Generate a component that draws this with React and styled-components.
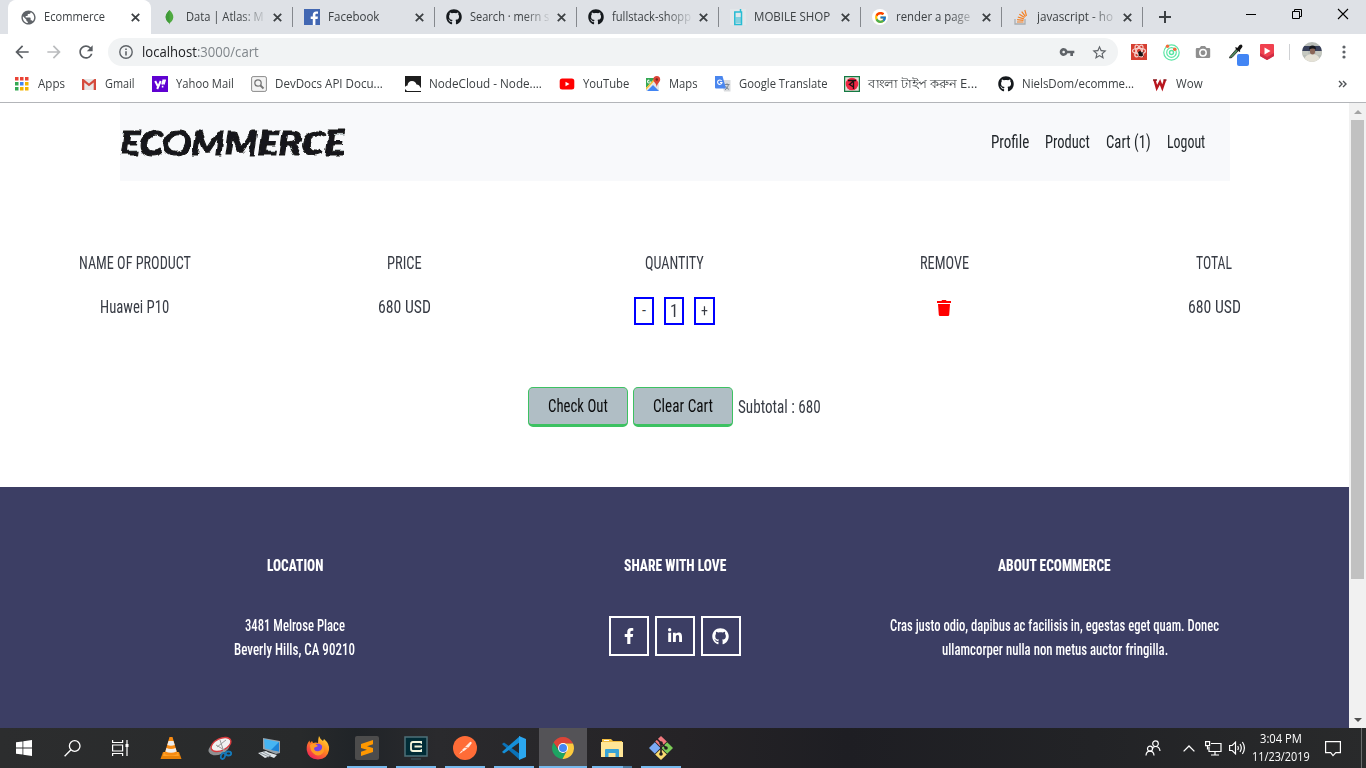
import React, { useLayoutEffect, useRef, useState } from "react";
import styled, { createGlobalStyle, css } from "styled-components";
import { FaFacebookF, FaLinkedinIn, FaGithub } from "react-icons/fa";
import { FcGoogle } from "react-icons/fc";
import { MdVpnKey, MdStarBorder, MdPublic, MdRefresh, MdArrowBack, MdArrowForward } from "react-icons/md";

const GlobalStyle = createGlobalStyle`
  * { box-sizing: border-box; }
  body { margin: 0; background: #fff; overflow: hidden; }
  svg { display: block; flex: none; }
`;

const Screen = styled.div`
  width: 1366px;
  height: 768px;
  display: flex;
  flex-direction: column;
  font-family: "Open Sans", "Noto Sans", sans-serif;
  font-size: 12px;
  color: #3c4043;
`;

/* ---------- text set to a given width ---------- */
const FitBox = styled.span`
  display: inline-block;
  flex: none;
  width: ${(p) => p.$w}px;
  white-space: nowrap;
  text-align: left;
`;
const FitInner = styled.span`
  display: inline-block;
  transform-origin: 0 50%;
`;
function Fit({ w, children }) {
  const ref = useRef(null);
  const [k, setK] = useState(1);
  useLayoutEffect(() => {
    if (ref.current.offsetWidth) setK(w / ref.current.offsetWidth);
  }, [w]);
  return (
    <FitBox $w={w}>
      <FitInner ref={ref} style={{ transform: `scaleX(${k})` }}>{children}</FitInner>
    </FitBox>
  );
}

/* ---------- tab strip ---------- */
const TabStrip = styled.div`
  height: 34px;
  flex: none;
  display: flex;
  background: #dee1e6;
  padding-left: 8px;
`;
const Tab = styled.div`
  width: ${(p) => p.$w || 142}px;
  height: 34px;
  flex: none;
  display: flex;
  align-items: center;
  padding: 0 7px 0 12px;
  position: relative;
  ${(p) =>
    p.$active &&
    css`
      background: #fff;
      border-radius: 8px 8px 0 0;
      box-shadow: 1px 0 0 #fff;
    `}
  ${(p) =>
    p.$line &&
    css`
      &::after {
        content: "";
        position: absolute;
        right: -1px;
        top: 7px;
        width: 1px;
        height: 20px;
        background: #85888d;
      }
    `}
`;
const TabIcon = styled.span`
  width: 16px;
  height: 16px;
  display: flex;
  align-items: center;
  justify-content: center;
`;
const TabTitle = styled.span`
  width: 82px;
  margin-left: 8px;
  white-space: nowrap;
  line-height: 18px;
  ${(p) => p.$fade && "mask-image: linear-gradient(90deg, #000 65%, transparent);"}
`;
const TabClose = styled.span`
  margin-left: auto;
  width: 16px;
  height: 16px;
  display: flex;
  align-items: center;
  justify-content: center;
`;
const NewTab = styled.div`
  width: 44px;
  margin-left: 1px;
  display: flex;
  align-items: center;
  justify-content: center;
`;
const WindowButtons = styled.div`
  margin-left: auto;
  display: flex;
  height: 28px;
  svg { width: 46px; height: 28px; }
`;

const Cross = ({ s = 9, w = 1.8, c = "#3c4043" }) => (
  <svg width={s} height={s} viewBox="0 0 9 9"><path d="M.8.8l7.4 7.4M8.2.8L.8 8.2" stroke={c} strokeWidth={w} /></svg>
);
const Leaf = () => (
  <svg width="16" height="16" viewBox="0 0 16 16"><path d="M7.500 1c3 3 4 5 3.800 7.500C11.100 11 9.500 12.700 7.800 14L7.500 15.500 7.100 14C5.500 12.700 3.800 11 3.700 8.500 3.500 5 6 3 7.500 1z" fill="#4faa41" /><path d="M7.500 1v14.500L7.100 14C5.500 12.700 3.800 11 3.700 8.500 3.500 5 6 3 7.500 1z" fill="#3f9a38" /></svg>
);
const FbSquare = () => (
  <svg width="16" height="16" viewBox="0 0 16 16"><path fill="#4267b2" d="M0 0h16v16H0z" /><path fill="#fff" d="M8.800 16V10H6.700V7.600h2.100V6c0-2.300 1.300-3.500 3.300-3.500.9 0 1.700.1 1.900.1v2.200h-1.300c-1 0-1.300.5-1.300 1.200v1.600h2.500L13.600 10h-2.200v6z" /></svg>
);
const Phone = () => (
  <svg width="16" height="18" viewBox="0 0 16 18" fill="none"><path d="M0 1h16v16H0z" fill="#e3e7ea" /><path d="M10.500 1v3M4.800 4h6.700v12.500H4.800z" stroke="#26bcd4" strokeWidth="1.500" /><path d="M5.500 10h5.500M5.500 12h5.500M5.500 14h5.500" stroke="#26bcd4" strokeWidth="1.200" /></svg>
);
const GoogleDot = styled.span`
  width: 16px;
  height: 16px;
  flex: none;
  border-radius: 8px;
  background: #fff;
  display: flex;
  align-items: center;
  justify-content: center;
`;
const StackIcon = () => (
  <svg width="16" height="16" viewBox="0 0 16 16" fill="none"><path d="M2 10v5h10v-5" stroke="#a9adb1" strokeWidth="1.300" /><path d="M4 13h6.500M4.100 10.700l6.400.7M4.800 8l6.100 1.800M6.300 5.200l5.300 3.200M8.700 2.700l3.800 4.900M11.800 1l1.700 5.800" stroke="#f48024" strokeWidth="1.200" /></svg>
);

const tabs = [
  { title: "Ecommerce", w: 61, icon: <MdPublic size={17} color="#5f6368" />, active: true },
  { title: "Data | Atlas: M", w: 78, icon: <Leaf />, fade: true, line: true },
  { title: "Facebook", w: 51, icon: <FbSquare />, line: true },
  { title: "Search · mern s", w: 79, icon: <FaGithub size={16} color="#15191d" />, fade: true, line: true },
  { title: "fullstack-shopp", w: 79, icon: <FaGithub size={16} color="#15191d" />, fade: true, line: true },
  { title: "MOBILE SHOP", w: 76, icon: <Phone />, line: true },
  { title: "render a page", w: 74, icon: <GoogleDot><FcGoogle size={13} /></GoogleDot>, fade: true, line: true, tab: 141 },
  { title: "javascript - ho", w: 76, icon: <StackIcon />, fade: true, line: true, tab: 141 },
];

/* ---------- toolbar ---------- */
const Toolbar = styled.div`
  height: 36px;
  flex: none;
  display: flex;
  align-items: center;
  padding-left: 6px;
`;
const NavButton = styled.span`
  width: 32px;
  display: flex;
  justify-content: center;
`;
const Omnibox = styled.div`
  width: 1010px;
  height: 28px;
  margin-left: 6px;
  border-radius: 14px;
  background: #f1f3f4;
  display: flex;
  align-items: center;
  padding: 0 10px 0 11px;
  font-size: 14px;
  color: #80868b;
  b { font-weight: 400; color: #202124; }
`;
const UrlText = styled.span`
  margin-left: 9px;
  line-height: 20px;
`;
const OmniActions = styled.span`
  margin-left: auto;
  display: flex;
  align-items: center;
  gap: 16px;
`;
const Extensions = styled.div`
  display: flex;
  align-items: center;
  margin-left: 13px;
`;
const Ext = styled.span`
  margin-left: ${(p) => p.$gap || 0}px;
`;
const ExtDivider = styled.span`
  width: 1px;
  height: 16px;
  margin-left: 14px;
  background: #cfd1d4;
`;
const Info = () => (
  <svg width="14" height="14" viewBox="0 0 14 14" fill="none" stroke="#5f6368" strokeWidth="1.400"><circle cx="7" cy="7" r="6.200" /><path d="M7 6.200v4.200M7 3.400v1.500" strokeWidth="1.600" /></svg>
);
const ReactExt = () => (
  <svg width="16" height="16" viewBox="0 0 16 16" fill="none"><path fill="#d63f31" d="M0 0h16v16H0z" /><g stroke="#f7cdc8" strokeWidth="1.300"><ellipse cx="8" cy="7" rx="6.500" ry="2.600" /><ellipse cx="8" cy="7" rx="6.500" ry="2.600" transform="rotate(60 8 7)" /><ellipse cx="8" cy="7" rx="6.500" ry="2.600" transform="rotate(120 8 7)" /></g><path d="M7 8l2.500-1 2.500 3-1.500 2.500-2.500-.5z" fill="#151515" /><path d="M7.500 12l5-4M8.500 7.500l4 5" stroke="#151515" /></svg>
);
const RadarExt = () => (
  <svg width="17" height="17" viewBox="0 0 17 17" fill="none" stroke="#5ce6a5"><circle cx="8.500" cy="8.500" r="7.700" strokeWidth="1.200" /><circle cx="8.500" cy="8.500" r="4.800" strokeWidth="1.200" /><circle cx="8.500" cy="8.500" r="2" strokeWidth="1.500" /><circle cx="4.500" cy="2.300" r="1.700" fill="#f26b3a" stroke="none" /><circle cx="11.800" cy="5.200" r="1.800" fill="#f26b3a" stroke="none" /></svg>
);
const CameraExt = () => (
  <svg width="16" height="16" viewBox="0 0 16 16"><path fill="#8f8f8f" d="M2 4h2.500L6 2h4l1.500 2H14q1.200 0 1.200 1.200v7.600Q15.200 14 14 14H2Q.8 14 .8 12.800V5.200Q.8 4 2 4z" /><circle cx="8" cy="8.700" r="3.200" fill="none" stroke="#fff" strokeWidth="1.500" /></svg>
);
const PickerExt = () => (
  <svg width="22" height="28" viewBox="0 0 22 28"><g transform="translate(0 4.500)"><path d="M2 14L8.500 6.500l1.800 1.700L4 15l-2.500.5z" fill="#4d8a5d" stroke="#222" strokeWidth=".8" /><path d="M7.500 5l4.500 4M9 7l3-4q1.800-1 1.800 1L11 8z" fill="#111" stroke="#111" strokeWidth="1.300" /></g><rect x="9" y="16" width="12" height="12" rx="2" fill="#4285f4" /></svg>
);
const VideoExt = () => (
  <svg width="16" height="16" viewBox="0 0 16 16"><path fill="#f0414f" d="M2 0h12q1 0 1 1v11L8 16l-7-4V1q0-1 1-1z" /><path fill="#cf2d45" d="M1 9l7 4 7-4v3l-7 4-7-4z" /><path fill="#fff" d="M5.500 3.500v7L11.500 7z" /></svg>
);
const Avatar = () => (
  <svg width="20" height="20" viewBox="0 0 20 20"><defs><clipPath id="av"><circle cx="10" cy="10" r="10" /></clipPath></defs><g clipPath="url(#av)"><path fill="#b9bdb8" d="M0 0h20v20H0z" /><path fill="#39405a" d="M0 4h20v5H0z" /><path fill="#c5c8c0" d="M0 9h6v4H0zM14 9h6v4h-6z" /><path fill="#e4e1d6" d="M2 20q0-8 8-8t8 8z" /><ellipse cx="10.500" cy="9" rx="2.600" ry="3.500" fill="#8a6658" /><path fill="#16171c" d="M7 7.500q0-4 3.500-4t3.500 4q-3-2-7 0z" /></g></svg>
);
const Dots = () => (
  <svg width="4" height="16" viewBox="0 0 4 16" fill="#5f6368"><circle cx="2" cy="3" r="1.600" /><circle cx="2" cy="8" r="1.600" /><circle cx="2" cy="13" r="1.600" /></svg>
);

/* ---------- bookmarks ---------- */
const Bookmarks = styled.div`
  height: 33px;
  flex: none;
  display: flex;
  align-items: center;
  padding: 0 19px 4px 14px;
  border-bottom: 1px solid #b3b5b9;
`;
const Bookmark = styled.div`
  width: ${(p) => p.$w}px;
  flex: none;
  display: flex;
  align-items: center;
  gap: 8px;
  line-height: 18px;
`;
const More = styled.span`
  margin-left: auto;
`;
const AppsIcon = () => (
  <svg width="16" height="16" viewBox="0 0 16 16">
    {["#ea4335", "#ea4335", "#ea4335", "#34a853", "#4285f4", "#f4b400", "#34a853", "#f4b400", "#f4b400"].map((c, i) => (
      <rect key={i} x={1 + (i % 3) * 5} y={1 + Math.floor(i / 3) * 5} width="3.500" height="3.500" fill={c} />
    ))}
  </svg>
);
const GmailIcon = () => (
  <svg width="16" height="16" viewBox="0 0 16 16"><path fill="#e8e8e8" d="M1 3h14v11H1z" /><path fill="#d54b3d" d="M1 14V3h1.500L8 7.500 13.500 3H15v11h-2.300V6.500L8 10.300 3.300 6.500V14z" /></svg>
);
const YahooIcon = () => (
  <svg width="16" height="16" viewBox="0 0 16 16" fill="none" stroke="#fff"><path fill="#5f01d1" stroke="none" d="M0 0h16v16H0z" /><path strokeWidth="2" d="M3.200 5l2.500 5M8.700 5l-3.500 8" /><path strokeWidth="1.700" d="M11.500 3.500L10 8.500M13.300 3.500l-1.500 5M9.800 10.600h1.600" /></svg>
);
const DevDocs = () => (
  <svg width="16" height="16" viewBox="0 0 16 16" fill="none" stroke="#777"><rect x=".6" y=".6" width="14.800" height="14.800" rx="1.500" fill="#f3f3f3" stroke="#8a8a8a" /><circle cx="7" cy="7" r="3.200" strokeWidth="1.300" /><path d="M9.500 9.500l3 3" strokeWidth="2" /></svg>
);
const CloudIcon = () => (
  <svg width="16" height="16" viewBox="0 0 16 16"><path fill="#1d1d1d" d="M0 0h16v16H0z" /><path fill="#fff" d="M0 13v-2q.5-1.500 2.500-1.500Q3 5 7 5q3.500 0 4.500 3.500 3 0 3.500 2.500l1 1v3H2z" /></svg>
);
const YouTubeIcon = () => (
  <svg width="16" height="16" viewBox="0 0 16 16"><rect x=".7" y="2.500" width="14.600" height="11" rx="2.500" fill="#f00" /><path fill="#fff" d="M6.500 5.700v4.600L10.500 8z" /></svg>
);
const MapsIcon = () => (
  <svg width="16" height="16" viewBox="0 0 16 16"><path fill="#e6e6e6" d="M1 2h13v13H1z" /><path fill="#34a853" d="M1 2h9L1 12z" /><path fill="#4285f4" d="M2 15l6-6 6 6z" /><path fill="#fbc02d" d="M1 12l9-10h2L1 14z" /><path fill="#fff" d="M4 3.500a2 2 0 102 2H4.500v.8h.6A1.100 1.100 0 114.800 4.600z" /><path fill="#db4437" d="M11.800 0A3.500 3.500 0 0115.200 3.500C15.200 6 12.300 7 11.800 11 11.300 7 8.300 6 8.300 3.500A3.500 3.500 0 0111.800 0z" /><circle cx="11.800" cy="3.500" r="1.200" fill="#7c231b" /></svg>
);
const TranslateIcon = () => (
  <svg width="16" height="16" viewBox="0 0 16 16" fill="none"><path fill="#d9dbde" d="M6 4h9.500v11.500H9z" /><path d="M9.500 8.500h5M12 7.300v1.200M10 14q3-2 3.500-5.500M10.500 10q1 2 3.500 3.500" stroke="#76828f" strokeWidth=".9" /><path fill="#4a86ee" d="M0 0h7.500L11 12.500H1q-1 0-1-1z" /><path d="M6.700 5A2.200 2.200 0 107 6.500H5" stroke="#fff" strokeWidth="1.100" /></svg>
);
const BanglaIcon = () => (
  <svg width="16" height="16" viewBox="0 0 16 16" fill="none"><path fill="#e8dfd9" stroke="#147a43" strokeWidth="1.200" d="M.6.6h14.800v14.800H.6z" /><circle cx="8" cy="8" r="6.300" fill="#ef2744" /><path d="M4 4.500h8M9.500 4.500v8.500M9.500 5L5.500 8.500l4 2.500" stroke="#1d1212" strokeWidth="1.400" /></svg>
);
const WowIcon = () => (
  <svg width="16" height="16" viewBox="0 0 16 16" fill="none"><path d="M2.500 4l2.300 8L8 6l2.300 6L13 4" stroke="#b9161e" strokeWidth="2.400" /><path d="M1 4h4M11.500 4h3" stroke="#8b1a1f" strokeWidth="1.300" /></svg>
);
const bookmarks = [
  ["Apps", 67, 27, <AppsIcon />],
  ["Gmail", 71, 30, <GmailIcon />],
  ["Yahoo Mail", 99, 58, <YahooIcon />],
  ["DevDocs API Docu...", 154, 108, <DevDocs />],
  ["NodeCloud - Node....", 154, 113, <CloudIcon />],
  ["YouTube", 86, 46, <YouTubeIcon />],
  ["Maps", 70, 29, <MapsIcon />],
  ["Google Translate", 129, 89, <TranslateIcon />],
  ["বাংলা টাইপ করুন E...", 154, 109, <BanglaIcon />],
  ["NielsDom/ecomme...", 154, 112, <FaGithub size={16} color="#15191d" />],
  ["Wow", 60, 27, <WowIcon />],
];

/* ---------- shop page ---------- */
const Viewport = styled.div`
  flex: 1;
  min-height: 0;
  display: flex;
`;
const Page = styled.main`
  width: 1349px;
  display: flex;
  flex-direction: column;
  font-family: Roboto, "Liberation Sans", sans-serif;
  font-stretch: 75%;
  font-size: 19px;
  color: #383c45;
`;
const Header = styled.header`
  width: 1110px;
  height: 78px;
  margin-left: 120px;
  padding-right: 25px;
  background: #f8f9fb;
  display: flex;
  align-items: center;
  justify-content: space-between;
`;
const Brand = styled.span`
  font: italic 900 33px/40px Lato, sans-serif;
  color: #17181a;
  -webkit-text-stroke: 1px #17181a;
  padding-bottom: 1px;
  filter: url(#marker);
`;
const MarkerFilter = () => (
  <svg width="0" height="0">
    <filter id="marker" x="-5%" y="-10%" width="110%" height="120%">
      <feTurbulence type="fractalNoise" baseFrequency="0.07" numOctaves="2" seed="4" result="n" />
      <feDisplacementMap in="SourceGraphic" in2="n" scale="6" xChannelSelector="R" yChannelSelector="G" />
    </filter>
  </svg>
);
const Nav = styled.nav`
  display: flex;
  gap: 16px;
  padding-bottom: 2px;
  color: #22272b;
`;
const Cart = styled.section`
  display: grid;
  grid-template-columns: repeat(5, 269.8px);
  grid-template-rows: 44px 44px;
  margin-top: 60px;
`;
const Cell = styled.div`
  height: 44px;
  display: flex;
  align-items: center;
  justify-content: center;
  padding-bottom: ${(p) => (p.$low ? 0 : 2)}px;
`;
const Stepper = styled.div`
  display: flex;
  gap: 10px;
  margin-top: 8px;
`;
const StepBox = styled.span`
  width: ${(p) => p.$w || 20}px;
  height: 28px;
  padding-bottom: 1px;
  border: 2px solid #00f;
  display: flex;
  align-items: center;
  justify-content: center;
  font-size: ${(p) => p.$size || 19}px;
`;
const Actions = styled.div`
  height: 40px;
  margin: 58px 0 60px 528px;
  display: flex;
  align-items: center;
  gap: 5px;
`;
const Subtotal = styled.span`
  padding-bottom: 2px;
`;
const Button = styled.button`
  width: 100px;
  height: 40px;
  padding: 0 0 2px;
  border: 1px solid #3dc162;
  border-bottom-width: 3px;
  border-radius: 5px;
  background: #b0bec5;
  font: inherit;
  color: #0b0c0d;
`;
const Footer = styled.footer`
  flex: 1;
  background: #3c3e64;
  color: #fff;
  display: grid;
  grid-template-columns: repeat(3, 380px);
  justify-content: center;
  font-size: 17px;
  line-height: 24px;
  text-align: center;
`;
const FooterColumn = styled.div`
  padding-top: 66px;
  display: flex;
  flex-direction: column;
  align-items: center;
`;
const FooterTitle = styled.h4`
  margin: 0 0 36px;
  font-size: 17px;
  font-weight: 800;
`;
const FooterText = styled.div`
  display: flex;
  flex-direction: column;
  align-items: center;
  font-weight: 500;
`;
const Socials = styled.div`
  display: flex;
  gap: 6px;
  margin-top: 3px;
`;
const Social = styled.span`
  width: 40px;
  height: 40px;
  border: 2px solid #fff;
  display: flex;
  align-items: center;
  justify-content: center;
`;
const Scrollbar = styled.div`
  width: 17px;
  background: #f1f1f1;
  display: flex;
  flex-direction: column;
  align-items: center;
  justify-content: space-between;
`;
const Thumb = styled.div`
  width: 13px;
  height: 459px;
  margin-bottom: auto;
  background: #c1c1c1;
`;
const ScrollArrow = styled.span`
  height: 17px;
  display: flex;
  align-items: center;
`;
const TrashSlot = styled.span`
  margin-top: 2px;
`;
const Trash = () => (
  <svg width="14" height="16" viewBox="0 0 14 16" fill="#f00"><path d="M0 1h4.500l.5-1h4l.500 1H14v2H0zM1 4h12l-.8 11q-.1 1-1.200 1H3q-1 0-1.200-1z" /></svg>
);

/* ---------- taskbar ---------- */
const Taskbar = styled.div`
  height: 40px;
  flex: none;
  background: linear-gradient(90deg, #2c2d2e 0%, #282a2b 22%, #202428 26%, #2a2a2d 32%, #252326 50%, #1e1e23 62%, #222326 80%, #292a2b 100%);
  display: flex;
  color: #fff;
`;
const Slot = styled.div`
  width: 48px;
  height: 40px;
  flex: none;
  display: flex;
  align-items: center;
  justify-content: center;
  position: relative;
  margin-left: ${(p) => p.$gap || 0}px;
  background: ${(p) => (p.$active ? "#545357" : "transparent")};
  ${(p) =>
    p.$open &&
    css`
      &::after {
        content: "";
        position: absolute;
        left: ${p.$active ? 0 : 4}px;
        right: ${p.$active ? 0 : 4}px;
        bottom: 0;
        height: 2px;
        background: ${p.$stack ? "linear-gradient(90deg, #76b9ed 31px, #4c7ba0 31px)" : "#76b9ed"};
      }
    `}
`;
const Tray = styled.div`
  margin-left: auto;
  display: flex;
  align-items: center;
  padding-right: 4px;
`;
const TrayItem = styled.span`
  width: ${(p) => p.$w}px;
  display: flex;
  justify-content: center;
`;
const Clock = styled.span`
  width: 64px;
  display: flex;
  flex-direction: column;
  align-items: center;
  line-height: 18px;
`;
const DesktopEdge = styled.span`
  width: 1px;
  height: 40px;
  margin-left: 8px;
  background: #6b6c6d;
`;

const Windows = () => (
  <svg width="16" height="16" viewBox="0 0 16 16" fill="#fff"><path d="M0 2.300L6.500 1.400V7.600H0zM7.300 1.300L16 0V7.600H7.300zM0 8.400H6.500V14.600L0 13.700zM7.300 8.400H16V16L7.300 14.700z" /></svg>
);
const SearchGlass = () => (
  <svg width="17" height="17" viewBox="0 0 17 17" fill="none" stroke="#fff" strokeWidth="1.300"><circle cx="10.700" cy="6" r="5.300" /><path d="M7 9.800L.6 16.200" /></svg>
);
const TaskView = () => (
  <svg width="17" height="16" viewBox="0 0 17 16" fill="none" stroke="#fff" strokeWidth="1.200"><path d="M.6 0v2.500h10V0M.6 16v-2.500h10V16M.6 5h10v6H.6zM15 0v16" /><path d="M13.500 4h3v3h-3z" fill="#fff" stroke="none" /></svg>
);
const Vlc = () => (
  <svg width="22" height="24" viewBox="0 0 22 24"><path fill="#ea8208" d="M3 16h16l2.500 7H.5z" /><path fill="#ffa329" d="M4 16h14l1 4H3z" /><path fill="#f88b13" d="M9.500 1h3l5 17q-6.500 3-13 0z" /><path fill="#eee" d="M8.500 5h5l1.200 4q-3.700 1.500-7.400 0zM6.400 12q4.600 2 9.200 0l1 3.500q-5.600 2.500-11.200 0z" /></svg>
);
const Snip = () => (
  <svg width="24" height="24" viewBox="0 0 24 24" fill="none"><ellipse cx="11" cy="12" rx="11" ry="6.500" transform="rotate(-22 11 12)" fill="#8e9092" /><ellipse cx="13" cy="8.500" rx="10.500" ry="6" transform="rotate(-25 13 8.500)" fill="#f1f1f1" stroke="#d83a3d" strokeWidth="1.400" /><path d="M12 4l4 12M8 9l10 6M9 11l9-7" stroke="#9b9b9b" /><ellipse cx="15" cy="20" rx="2" ry="3" transform="rotate(20 15 20)" stroke="#1479b9" strokeWidth="1.800" /><ellipse cx="20.500" cy="17.500" rx="2.700" ry="2" stroke="#1479b9" strokeWidth="1.800" /></svg>
);
const Computer = () => (
  <svg width="24" height="22" viewBox="0 0 24 22"><path fill="#9aa2a9" d="M6 1l17 3v12l-4 1L6 12z" /><path fill="#46b5f3" d="M7 2l15 3v9.500L8 11.500z" /><path fill="#1c84d8" d="M22 5v9.500L14 13z" /><path fill="#dfe4e8" d="M10 15l10 3-3 3-7-3zM1 16l8-2 7 4-8 3z" /><path d="M3 16l9 4M6 15l8 4" stroke="#8f989e" /></svg>
);
const Firefox = () => (
  <svg width="24" height="24" viewBox="0 0 24 24"><defs><linearGradient id="ff" x1=".9" y1="0" x2=".2" y2="1"><stop offset="0" stopColor="#ffe53b" /><stop offset=".45" stopColor="#ff8a1e" /><stop offset="1" stopColor="#ee1c5b" /></linearGradient></defs><path fill="url(#ff)" d="M13 0q1 3 4 5l1-2q6 5 5 11-1.500 9-11 9.500Q2 23 .7 14 .3 8 3.500 4.500L4 7l2-2 1 2q3-1 5 0 0-4 1-7z" /><circle cx="12" cy="12.500" r="4.800" fill="#7542e5" /><path fill="#ff9a24" d="M4 9q4-3 8 1l-2 1q-2 0-2 2 1 3 5 2 4-1 3-6 4 4 1 8-5 5-10 0-3-3-3-8z" /></svg>
);
const Sublime = () => (
  <svg width="24" height="24" viewBox="0 0 24 24"><rect width="24" height="24" rx="2" fill="#4c4c4c" /><path fill="#ff9800" d="M6 8l12-4v4.300L12 10.300 18 12v4L6 20v-4.300L12 13.700 6 12z" /></svg>
);
const Terminal = () => (
  <svg width="24" height="24" viewBox="0 0 24 24" fill="none"><path d="M1 1h22v19H1z" fill="#002c36" stroke="#4e7079" strokeWidth="1.500" /><path d="M18 6H9Q7 6 7 8v5q0 2 2 2h9M10.500 10.500H18" stroke="#f2f5dc" strokeWidth="1.800" /><path d="M17.300 5v3M17.300 13v3" stroke="#f2f5dc" strokeWidth="1.200" /><path d="M7 23h10" stroke="#3e5d65" /></svg>
);
const Postman = () => (
  <svg width="24" height="24" viewBox="0 0 24 24" fill="none"><circle cx="12" cy="12" r="12" fill="#ff6c37" /><path d="M6 18l3-4 5-5 3-3q2-1 1.500 1.500L16 11l-5 4-5 3z" fill="#ffe9df" /><path d="M8 14l3 2M11 11l4 1" stroke="#ff6c37" strokeWidth=".8" /></svg>
);
const VsCode = () => (
  <svg width="24" height="24" viewBox="0 0 24 24"><path fill="#0b72b8" d="M0 8l2-1.500L18 18v6L1 9z" /><path fill="#158fd8" d="M0 16l2 1.500L18 6V0L1 15z" /><path fill="#2ba7f0" d="M17 0l7 3v18l-7 3z" /></svg>
);
const Chrome = () => (
  <svg width="22" height="22" viewBox="0 0 22 22"><path fill="#db4437" d="M1.500 5.500A11 11 0 0120.500 5.500L21 6.500H11L7 13z" /><path fill="#1da462" d="M1.500 5.500L6.700 13.500 11 16l3.500.5L10.500 22A11 11 0 011.500 5.500z" /><path fill="#fcca3e" d="M11 6.500h10A11 11 0 0110.500 22L15 13.500z" /><circle cx="11" cy="11" r="5" fill="#fff" /><circle cx="11" cy="11" r="4" fill="#4486f4" /></svg>
);
const Folder = () => (
  <svg width="22" height="20" viewBox="0 0 22 20"><path fill="#f1bc3f" d="M1 1h9l2 2h9v5H1z" /><path fill="#ffe596" d="M0 4h22v15H0z" /><path fill="#38a3d6" d="M4 19v-7q0-1 1-1h12q1 0 1 1v7h-3.500v-4h-7v4z" /><path fill="#fff" d="M3 2h5v1H3z" /></svg>
);
const GitBash = () => (
  <svg width="24" height="24" viewBox="0 0 24 24" fill="none"><path fill="#f0797e" d="M12 0l5.800 5.500-5.800 5.700-5.800-5.700z" /><path fill="#7baaf5" d="M5.800 6.200l5.700 5.800-5.700 5.800L0 12z" /><path fill="#7ccb57" d="M18.200 6.200L24 12l-5.800 5.800-5.700-5.800z" /><path fill="#f9db70" d="M12 12.800l5.800 5.700L12 24l-5.800-5.500z" /><path d="M8 3l9 9M12 6v12" stroke="#211c20" strokeWidth="1.600" /><circle cx="12" cy="7" r="1.800" fill="#211c20" /><circle cx="17" cy="12" r="1.800" fill="#211c20" /><circle cx="12" cy="18" r="1.800" fill="#211c20" /></svg>
);

const apps = [
  [<Vlc />, {}], [<Snip />, {}], [<Computer />, {}], [<Firefox />, {}],
  [<Sublime />, { $open: true }], [<Terminal />, { $open: true }], [<Postman />, { $open: true }],
  [<VsCode />, { $open: true }], [<Chrome />, { $open: true, $active: true }],
  [<Folder />, { $open: true, $stack: true }], [<GitBash />, { $open: true }],
];

export default function App() {
  return (
    <Screen>
      <GlobalStyle />
      <TabStrip>
        {tabs.map((t, i) => (
          <Tab key={i} $active={t.active} $line={t.line} $w={t.tab}>
            <TabIcon>{t.icon}</TabIcon>
            <TabTitle $fade={t.fade}><Fit w={t.w}>{t.title}</Fit></TabTitle>
            <TabClose><Cross /></TabClose>
          </Tab>
        ))}
        <NewTab>
          <svg width="12" height="12" viewBox="0 0 12 12"><path d="M6 0v12M0 6h12" stroke="#3c4043" strokeWidth="2" /></svg>
        </NewTab>
        <WindowButtons>
          <svg viewBox="0 0 46 28"><path d="M18 14.500h10" stroke="#000" /></svg>
          <svg viewBox="0 0 46 28" fill="none" stroke="#000"><path d="M18.500 11.500h7v7h-7zM20.500 11.500v-2h7v7h-2" /></svg>
          <svg viewBox="0 0 46 28"><path d="M18 9l10 10M28 9L18 19" stroke="#000" strokeWidth="1.100" /></svg>
        </WindowButtons>
      </TabStrip>

      <Toolbar>
        <NavButton><MdArrowBack size={20} color="#5a5e63" /></NavButton>
        <NavButton><MdArrowForward size={20} color="#babcbe" /></NavButton>
        <NavButton><MdRefresh size={20} color="#5a5e63" /></NavButton>
        <Omnibox>
          <Info />
          <UrlText><Fit w={117}><b>localhost</b>:3000/cart</Fit></UrlText>
          <OmniActions>
            <MdVpnKey size={16} color="#5f6368" />
            <MdStarBorder size={17} color="#5f6368" />
          </OmniActions>
        </Omnibox>
        <Extensions>
          <ReactExt />
          <Ext $gap={16}><RadarExt /></Ext>
          <Ext $gap={15}><CameraExt /></Ext>
          <Ext $gap={17}><PickerExt /></Ext>
          <Ext $gap={9}><VideoExt /></Ext>
          <ExtDivider />
          <Ext $gap={12}><Avatar /></Ext>
          <Ext $gap={20}><Dots /></Ext>
        </Extensions>
      </Toolbar>

      <Bookmarks>
        {bookmarks.map(([label, width, textWidth, icon]) => (
          <Bookmark key={label} $w={width}>
            {icon}
            <Fit w={textWidth}>{label}</Fit>
          </Bookmark>
        ))}
        <More>
          <svg width="9" height="8" viewBox="0 0 9 8" fill="none" stroke="#4d5155" strokeWidth="1.400"><path d="M1 1l3 3-3 3M5 1l3 3-3 3" /></svg>
        </More>
      </Bookmarks>

      <Viewport>
        <Page>
          <MarkerFilter />
          <Header>
            <Brand><Fit w={225}>ECOMMERCE</Fit></Brand>
            <Nav>
              <Fit w={38}>Profile</Fit>
              <Fit w={45}>Product</Fit>
              <Fit w={45}>Cart (1)</Fit>
              <Fit w={38}>Logout</Fit>
            </Nav>
          </Header>

          <Cart>
            <Cell><Fit w={112}>NAME OF PRODUCT</Fit></Cell>
            <Cell><Fit w={35}>PRICE</Fit></Cell>
            <Cell><Fit w={59}>QUANTITY</Fit></Cell>
            <Cell><Fit w={49}>REMOVE</Fit></Cell>
            <Cell><Fit w={36}>TOTAL</Fit></Cell>
            <Cell><Fit w={69}>Huawei P10</Fit></Cell>
            <Cell><Fit w={53}>680 USD</Fit></Cell>
            <Cell $low>
              <Stepper>
                <StepBox $size={16}><Fit w={4}>-</Fit></StepBox>
                <StepBox><Fit w={8}>1</Fit></StepBox>
                <StepBox $w={21} $size={16}><Fit w={7}>+</Fit></StepBox>
              </Stepper>
            </Cell>
            <Cell $low><TrashSlot><Trash /></TrashSlot></Cell>
            <Cell><Fit w={53}>680 USD</Fit></Cell>
          </Cart>

          <Actions>
            <Button><Fit w={60}>Check Out</Fit></Button>
            <Button><Fit w={60}>Clear Cart</Fit></Button>
            <Subtotal><Fit w={83}>Subtotal : 680</Fit></Subtotal>
          </Actions>

          <Footer>
            <FooterColumn>
              <FooterTitle><Fit w={56}>LOCATION</Fit></FooterTitle>
              <FooterText>
                <Fit w={100}>3481 Melrose Place</Fit>
                <Fit w={121}>Beverly Hills, CA 90210</Fit>
              </FooterText>
            </FooterColumn>
            <FooterColumn>
              <FooterTitle><Fit w={102}>SHARE WITH LOVE</Fit></FooterTitle>
              <Socials>
                <Social><FaFacebookF size={16} /></Social>
                <Social><FaLinkedinIn size={16} /></Social>
                <Social><FaGithub size={17} /></Social>
              </Socials>
            </FooterColumn>
            <FooterColumn>
              <FooterTitle><Fit w={113}>ABOUT ECOMMERCE</Fit></FooterTitle>
              <FooterText>
                <Fit w={329}>Cras justo odio, dapibus ac facilisis in, egestas eget quam. Donec</Fit>
                <Fit w={226}>ullamcorper nulla non metus auctor fringilla.</Fit>
              </FooterText>
            </FooterColumn>
          </Footer>
        </Page>
        <Scrollbar>
          <ScrollArrow><svg width="8" height="4" viewBox="0 0 8 4"><path d="M0 4l4-4 4 4z" fill="#a3a3a3" /></svg></ScrollArrow>
          <Thumb />
          <ScrollArrow><svg width="8" height="4" viewBox="0 0 8 4"><path d="M0 0l4 4 4-4z" fill="#505050" /></svg></ScrollArrow>
        </Scrollbar>
      </Viewport>

      <Taskbar>
        <Slot><Windows /></Slot>
        <Slot><SearchGlass /></Slot>
        <Slot><TaskView /></Slot>
        {apps.map(([icon, state], i) => (
          <Slot key={i} $gap={i === 0 ? 3 : 1} {...state}>{icon}</Slot>
        ))}
        <Tray>
          <TrayItem $w={48}>
            <svg width="16" height="16" viewBox="0 0 16 16" fill="none" stroke="#fff" strokeWidth="1.200"><circle cx="10.500" cy="3.700" r="2.800" /><path d="M7.500 9q0-2.500 3-2.500Q14.500 6.500 15 11" /><circle cx="5" cy="8.700" r="2.500" /><path d="M1 15.500q.3-4.300 4-4.300t4 4.300" /></svg>
          </TrayItem>
          <TrayItem $w={24}>
            <svg width="12" height="7" viewBox="0 0 12 7" fill="none" stroke="#fff" strokeWidth="1.300"><path d="M.6 6.400L6 1l5.400 5.400" /></svg>
          </TrayItem>
          <TrayItem $w={24}>
            <svg width="17" height="15" viewBox="0 0 17 15" fill="none" stroke="#fff" strokeWidth="1.200"><path d="M6 2.500h10v8H4V6M10 10.500v3.500M6 14h8M.6.600h4v4h-4zM2.500 4.600v4" /></svg>
          </TrayItem>
          <TrayItem $w={24}>
            <svg width="17" height="14" viewBox="0 0 17 14" fill="none" stroke="#fff" strokeWidth="1.200"><path d="M.6 4.500h2.600L6.500 1.200v11.600L3.200 9.500H.6zM8.700 5q1.300 2 0 4M11 3q2.600 4 0 8M13.400 1q4 6 0 12" /></svg>
          </TrayItem>
          <Clock>
            <Fit w={42}>3:04 PM</Fit>
            <Fit w={58}>11/23/2019</Fit>
          </Clock>
          <TrayItem $w={40}>
            <svg width="16" height="17" viewBox="0 0 16 17" fill="none" stroke="#fff" strokeWidth="1.200"><path d="M.6 1.600h14.800v11h-4.600L8 15.600l-2.300-3H.6z" /></svg>
          </TrayItem>
          <DesktopEdge />
        </Tray>
      </Taskbar>
    </Screen>
  );
}
